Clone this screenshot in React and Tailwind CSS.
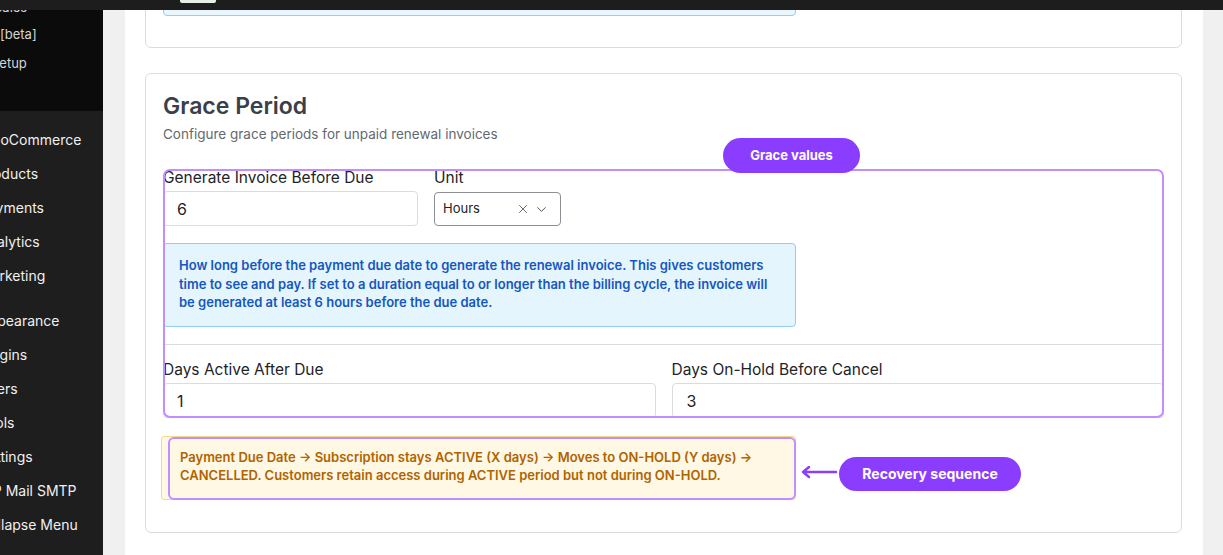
import { X, ChevronDown } from "lucide-react";

const menu = [
  { label: "WooCommerce" },
  { label: "Products" },
  { label: "Payments" },
  { label: "Analytics" },
  { label: "Marketing", sepAfter: true },
  { label: "Appearance" },
  { label: "Plugins" },
  { label: "Users" },
  { label: "Tools" },
  { label: "Settings" },
  { label: "WP Mail SMTP" },
  { label: "Collapse Menu" },
];

function Sidebar() {
  return (
    <div className="w-[103px] shrink-0 flex flex-col overflow-hidden bg-[#1e1e1e] text-[#f0f0f1]">
      <div className="h-[101px] bg-[#0b0b0b] text-[13px] text-[#d6d6d6] overflow-hidden">
        <div className="-mt-[17px] h-[27px] leading-[29px] -ml-[6px]">Sales</div>
        <div className="h-[29px] leading-[29px]">[beta]</div>
        <div className="h-[29px] leading-[29px] -ml-[9px]">Setup</div>
      </div>
      <div className="pt-[12px] text-[14px]">
        {menu.map((m) => (
          <div
            key={m.label}
            className={`h-[34px] leading-[34px] whitespace-nowrap -ml-[21px] ${m.sepAfter ? "mb-[11px]" : ""}`}
          >
            {m.label}
          </div>
        ))}
      </div>
    </div>
  );
}

function GraceCard() {
  return (
    <div className="mt-[25px] border border-[#dcdcde] rounded-[6px] bg-white px-[17px] pt-[17px] pb-[32px]">
      <h2 className="text-[23px] leading-[30px] font-semibold text-[#3a4049]">Grace Period</h2>
      <p className="mt-[3px] text-[13.5px] leading-[20px] text-[#646970]">
        Configure grace periods for unpaid renewal invoices
      </p>

      <div className="relative mt-[24px]">
        <div className="flex gap-4">
          <div className="w-[255px]">
            <label className="block text-[15.5px] leading-[20px] text-[#1d2327]">Generate Invoice Before Due</label>
            <div className="mt-[3px] h-[35px] border border-[#dcdcde] rounded-[4px] pl-[13px] flex items-center text-[16px] text-[#1d2327]">
              6
            </div>
          </div>
          <div className="w-[127px]">
            <label className="block text-[15.5px] leading-[20px] text-[#1d2327]">Unit</label>
            <div className="mt-[4px] h-[34px] border border-[#8c8f94] rounded-[4px] pl-[8px] pr-[11px] flex items-center text-[13px] text-[#1d2327]">
              <span className="flex-1">Hours</span>
              <X size={14} strokeWidth={1.5} className="text-[#555]" />
              <ChevronDown size={15} strokeWidth={1.6} className="ml-[4px] text-[#555]" />
            </div>
          </div>
        </div>

        <div className="mt-[17px] w-[633px] h-[84px] bg-[#e5f5fd] border border-[#93cdf3] rounded-[4px] px-[15px] pt-[12px] text-[13px] leading-[18.5px] font-semibold text-[#1557c0]">
          How long before the payment due date to generate the renewal invoice. This gives customers
          <br />
          time to see and pay. If set to a duration equal to or longer than the billing cycle, the invoice will
          <br />
          be generated at least 6 hours before the due date.
        </div>

        <div className="mt-[17px] h-px bg-[#dcdcde]" />

        <div className="mt-[15px] grid grid-cols-2 gap-4">
          <div>
            <label className="block text-[15.5px] leading-[20px] text-[#1d2327]">Days Active After Due</label>
            <div className="mt-[3px] h-[35px] border border-[#dcdcde] rounded-[4px] pl-[13px] flex items-center text-[16px] text-[#1d2327]">
              1
            </div>
          </div>
          <div>
            <label className="block text-[15.5px] leading-[20px] text-[#1d2327]">Days On-Hold Before Cancel</label>
            <div className="mt-[3px] h-[35px] border border-[#dcdcde] rounded-[4px] pl-[14px] flex items-center text-[16px] text-[#1d2327]">
              3
            </div>
          </div>
        </div>

        <div className="absolute inset-x-0 top-[1px] bottom-0 border-2 border-[#c18dff] rounded-[7px] pointer-events-none" />
        <div className="absolute left-[560px] -top-[30px] w-[137px] h-[35px] rounded-full bg-[#8b3dff] text-white text-[13px] font-bold flex items-center justify-center">
          Grace values
        </div>
      </div>

      <div className="relative mt-[18px] -ml-[2px] w-[635px] h-[64px] bg-[#fff8e5] border border-[#f3d98c] rounded-[3px] pl-[18px] pt-[11px] text-[13px] leading-[18px] font-semibold text-[#b06400]">
        Payment Due Date → Subscription stays ACTIVE (X days) → Moves to ON-HOLD (Y days) →
        <br />
        CANCELLED. Customers retain access during ACTIVE period but not during ON-HOLD.
        <div className="absolute left-[6px] top-0 -right-px -bottom-px border-2 border-[#c18dff] rounded-[6px] pointer-events-none" />
        <svg className="absolute left-[638px] top-[28px]" width="38" height="14" viewBox="0 0 38 14" fill="none">
          <path d="M36 7H4M9 2L3 7l6 5" stroke="#8b3dff" strokeWidth="2.4" strokeLinecap="round" strokeLinejoin="round" />
        </svg>
        <div className="absolute left-[677px] top-[20px] w-[182px] h-[34px] rounded-full bg-[#8b3dff] text-white text-[14px] font-bold flex items-center justify-center whitespace-nowrap">
          Recovery sequence
        </div>
      </div>
    </div>
  );
}

export default function App() {
  return (
    <div className="w-[1223px] h-[555px] overflow-hidden flex flex-col font-['Inter',sans-serif]">
      <div className="h-[10px] shrink-0 bg-[#1d1d1d] relative">
        <div className="absolute left-[180px] top-0 w-[36px] h-[3px] bg-[#e6efe6] rounded-b-[2px]" />
      </div>
      <div className="flex flex-1 overflow-hidden">
        <Sidebar />
        <div className="flex-1 bg-[#f0f0f1] pl-[22px] pr-[20px] overflow-hidden">
          <div className="min-h-[620px] bg-white pl-[20px] pr-[21px]">
            <div className="-mt-[40px] h-[78px] border border-[#dcdcde] rounded-[6px] px-[17px] pt-[17px]">
              <div className="w-[633px] h-[28px] bg-[#e9f6fd] border border-[#93cdf3] rounded-[4px]" />
            </div>
            <GraceCard />
          </div>
        </div>
      </div>
    </div>
  );
}
